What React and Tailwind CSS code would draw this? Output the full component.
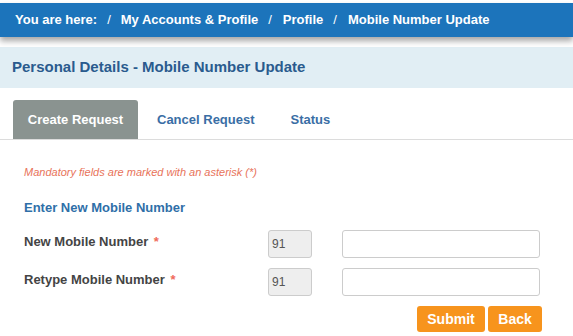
export default function App() {
  return (
    <div className="w-[573px] h-[336px] bg-white overflow-hidden" style={{ fontFamily: '"Liberation Sans", Arial, sans-serif' }}>
      <div className="pt-[3px]">
        <div className="h-[34px] bg-[#1c74bb] flex items-center pl-[15px] text-white font-bold text-[13px] shadow-[0_4px_6px_rgba(0,0,0,0.35)] relative z-10">
          <span>You are here:</span>
          <span className="mx-[10px] font-normal">/</span>
          <span>My Accounts &amp; Profile</span>
          <span className="ml-[10px] mr-[11px] font-normal">/</span>
          <span>Profile</span>
          <span className="ml-[10px] mr-[11px] font-normal">/</span>
          <span>Mobile Number Update</span>
        </div>
      </div>
      <div className="mt-[10px] h-[41px] bg-[#e1eef4] flex items-center pl-[12px] text-[#2a5b8e] font-bold text-[15px]">
        Personal Details - Mobile Number Update
      </div>
      <div className="mt-[12px] flex items-end border-b border-[#dcdcdc] pl-[13px] h-[40px]">
        <div className="w-[125px] h-[39px] bg-[#8a9390] rounded-t-[3px] flex items-center justify-center text-white font-bold text-[13px]">
          Create Request
        </div>
        <div className="h-[39px] flex items-center pl-[19px] text-[#3a6ea5] font-bold text-[13px]">Cancel Request</div>
        <div className="h-[39px] flex items-center pl-[36px] text-[#3a6ea5] font-bold text-[13px]">Status</div>
      </div>
      <div className="pl-[24px]">
        <div className="mt-[26px] text-[11px] italic text-[#e8735a] leading-[13px]">Mandatory fields are marked with an asterisk (*)</div>
        <div className="mt-[21px] text-[13px] text-[#2f6fa8] font-bold leading-[16px]">Enter New Mobile Number</div>
        <div className="mt-[14px] flex items-center h-[28px]">
          <div className="w-[244px] text-[13px] font-bold text-[#444] -mt-[5px]">
            New Mobile Number <span className="text-[#f06a5a] ml-[2px]">*</span>
          </div>
          <div className="w-[44px] h-[28px] bg-[#eeeeee] border border-[#cccccc] rounded-[3px] flex items-center pl-[3px] text-[12px] text-[#555]">91</div>
          <div className="ml-[30px] w-[198px] h-[28px] bg-white border border-[#cccccc] rounded-[3px]"></div>
        </div>
        <div className="mt-[10px] flex items-center h-[28px]">
          <div className="w-[244px] text-[13px] font-bold text-[#444] -mt-[5px]">
            Retype Mobile Number <span className="text-[#f06a5a] ml-[2px]">*</span>
          </div>
          <div className="w-[44px] h-[28px] bg-[#eeeeee] border border-[#cccccc] rounded-[3px] flex items-center pl-[3px] text-[12px] text-[#555]">91</div>
          <div className="ml-[30px] w-[198px] h-[28px] bg-white border border-[#cccccc] rounded-[3px]"></div>
        </div>
        <div className="mt-[10px] flex justify-start pl-[393px] gap-[3px]">
          <div className="w-[68px] h-[26px] bg-[#f7941d] rounded-[3px] flex items-center justify-center text-white font-bold text-[14px]">Submit</div>
          <div className="w-[54px] h-[26px] bg-[#f7941d] rounded-[3px] flex items-center justify-center text-white font-bold text-[14px]">Back</div>
        </div>
      </div>
    </div>
  );
}
